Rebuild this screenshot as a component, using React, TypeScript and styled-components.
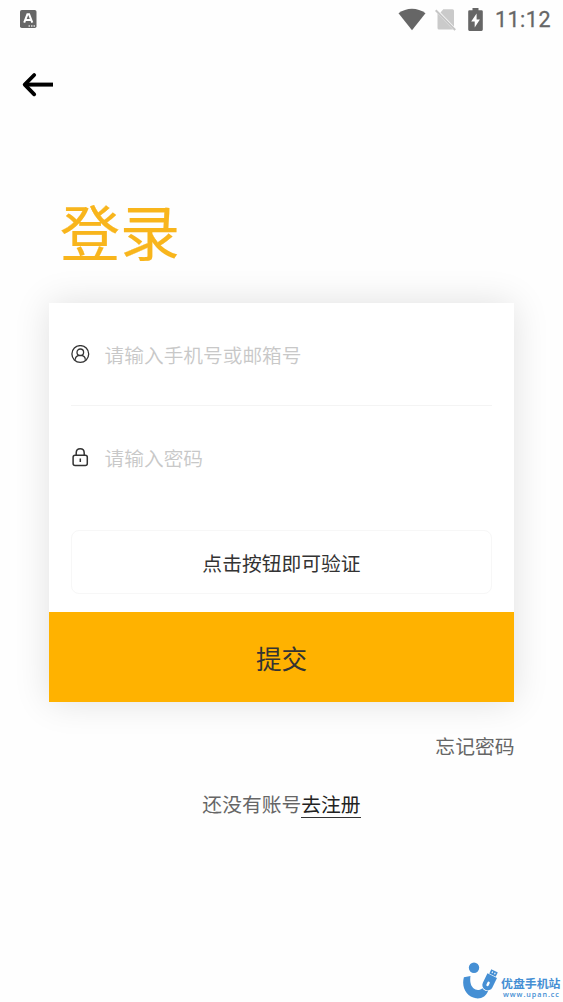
import React from 'react';
import styled, { createGlobalStyle } from 'styled-components';

const GlobalStyle = createGlobalStyle`
  * { box-sizing: border-box; }
  body {
    margin: 0;
    background: #fefefe;
    font-family: 'Noto Sans CJK SC', sans-serif;
  }
`;

const Screen = styled.main`
  display: flex;
  flex-direction: column;
  height: 1002px;
  overflow: hidden;
  background: #fefefe;
`;

const StatusBar = styled.header`
  display: flex;
  align-items: center;
  justify-content: space-between;
  height: 38px;
  padding: 0 12px 0 20px;
`;

const StatusIcons = styled.div`
  display: flex;
  align-items: center;
  gap: 9px;
  svg { display: block; }
`;

const Clock = styled.span`
  margin-left: 3px;
  padding-top: 2px;
  color: #666;
  font: 400 21.5px/36px Roboto, sans-serif;
  letter-spacing: 0.5px;
  -webkit-text-stroke: 0.3px #666;
`;

const NavBar = styled.nav`
  height: 92px;
  padding: 33px 0 0 21px;
`;

const BackButton = styled.button`
  display: block;
  padding: 0;
  border: 0;
  background: none;
  svg { display: block; }
`;

const Title = styled.h1`
  height: 86px;
  margin: 57px 0 30px 60px;
  color: #f8b51c;
  font-size: 60px;
  font-weight: 400;
  line-height: 86px;
  -webkit-text-stroke: 0.2px #f8b51c;
`;

const Card = styled.form`
  display: flex;
  flex-direction: column;
  width: 465px;
  height: 399px;
  margin-left: 49px;
  background: #fff;
  box-shadow: 0 0 34px rgba(0, 0, 0, 0.12);
`;

const Field = styled.label<{ $divided?: boolean }>`
  display: flex;
  align-items: center;
  gap: 14.6px;
  height: 103px;
  margin: 0 22px;
  border-bottom: 1px solid ${(p) => (p.$divided ? '#f4f4f4' : 'transparent')};
  svg { flex: none; }
`;

const Placeholder = styled.span`
  padding-top: 1px;
  color: #c8c8c8;
  font-size: 19.7px;
  font-weight: 350;
  line-height: 30px;
`;

const VerifyButton = styled.button`
  height: 64px;
  margin: 21px 22px 18px;
  padding: 2px 0 0;
  border: 1px solid #f7f7f7;
  border-radius: 8px;
  background: #fff;
  color: #333;
  font-family: inherit;
  font-size: 19.8px;
  line-height: 30px;
`;

const SubmitButton = styled.button`
  height: 90px;
  padding: 2px 0 0;
  border: 0;
  background: #ffb200;
  color: #333;
  font-family: inherit;
  font-size: 25.6px;
  line-height: 38px;
`;

const Forgot = styled.a`
  align-self: flex-end;
  margin: 29px 48.5px 0 0;
  color: #666;
  font-size: 19.8px;
  line-height: 30px;
`;

const SignUp = styled.p`
  display: flex;
  justify-content: center;
  margin: 28px 0 0;
  color: #666;
  font-size: 19.8px;
  line-height: 30px;
`;

const SignUpLink = styled.a`
  height: 29px;
  border-bottom: 1px solid #333;
  color: #222;
  line-height: 29px;
`;

const Footer = styled.footer`
  display: flex;
  align-items: flex-start;
  justify-content: flex-end;
  margin-top: auto;
  height: 40px;
  padding-right: 2px;
  color: #458fd4;
`;

const SiteName = styled.div`
  width: 60px;
  margin: 13px 0 0 3px;
  white-space: nowrap;
`;

const SiteLabel = styled.div`
  font-size: 11.9px;
  font-weight: 700;
  line-height: 15px;
`;

const SiteUrl = styled.div`
  padding-left: 2px;
  font: 600 7.2px/8px 'Open Sans', sans-serif;
  letter-spacing: 0.95px;
`;

const KeyboardIcon = () => (
  <svg width="17" height="20" viewBox="0 0 17 20">
    <rect y="1" width="16.5" height="18" rx="1.8" fill="#666" />
    <path d="M4.2 13.7 7.4 5.3h1.7l3.2 8.4M5.5 11h5.5" fill="none" stroke="#fff" strokeWidth="2" />
    <path d="M8.5 17h1.5m1 0h1.5m1 0h1.5" stroke="#ddd" strokeWidth="1.5" />
  </svg>
);

const WifiIcon = () => (
  <svg width="28" height="23" viewBox="0 0 28 23">
    <path d="M.5 5.300C8.500-.8 19.500-.8 27.500 5.300L14 22.300Z" fill="#666" />
  </svg>
);

const NoSimIcon = () => (
  <svg width="24" height="23" viewBox="0 0 24 23">
    <path d="M8.300 1.200h9.200q1.500 0 1.500 1.500v15.800L5.500 4.600Z M2.500 5.500 18 21.500H4Q2.500 21.500 2.500 20Z" fill="#cacaca" />
    <path d="M.7 2.200 20.200 22" stroke="#c6c6c6" strokeWidth="2" />
  </svg>
);

const BatteryIcon = () => (
  <svg width="15" height="23" viewBox="0 0 15 23">
    <path d="M4.500 0h6v2.300h3q1.300 0 1.300 1.300v18q0 1.300-1.300 1.300h-12q-1.300 0-1.300-1.300v-18q0-1.300 1.300-1.300h3Z" fill="#666" />
    <path d="M8.600 5.500 3.200 13.500h3.500v6l5.200-8H8.600Z" fill="#fff" />
  </svg>
);

const BackIcon = () => (
  <svg width="33" height="27" viewBox="0 0 33 27" fill="none" stroke="#000">
    <path d="M4 13.600h28" strokeWidth="4" />
    <path d="M13.200 4 3.700 13.600l9.500 9.700" strokeWidth="3.800" strokeLinecap="round" strokeLinejoin="round" />
  </svg>
);

const UserIcon = () => (
  <svg width="19" height="19" viewBox="0 0 19 19" fill="none" stroke="#333" strokeWidth="1.300">
    <circle cx="9.300" cy="9" r="8.400" />
    <circle cx="9.300" cy="7.300" r="3.300" />
    <path d="M4.300 14.800c0-2.800 2-4.400 5-4.400s5 1.600 5 4.400" />
  </svg>
);

const LockIcon = () => (
  <svg width="19" height="19" viewBox="0 0 19 19" fill="none" stroke="#333" strokeWidth="1.500">
    <rect x="2.100" y="7.200" width="14.200" height="10.200" rx="2" />
    <path d="M5.200 7V4.900c0-5.500 8-5.500 8 0V7M9.300 10.500V14" />
  </svg>
);

const SiteLogo = () => (
  <svg width="35" height="38" viewBox="0 0 35 38">
    <circle cx="11" cy="5.800" r="5.200" fill="currentColor" />
    <path d="M.9 15.200 7.500 14C6.500 20 8 25.500 12.500 27.500c2.500 1 5 .3 7-1.300 1.200 2 3.200 3 5.500 2.800C23.500 34 18.500 37 13 36.300 4 35-2 26 .9 15.200Z" fill="currentColor" />
    <g transform="rotate(26 26.500 19)">
      <path d="M21.300 13h10.600v10.500a5.300 5.300 0 0 1-10.600 0Z" fill="currentColor" />
      <rect x="23" y="7.600" width="7.200" height="4.800" rx=".4" fill="currentColor" />
      <path d="M25.200 9v1.700m2.800-1.700v1.700" stroke="#fff" />
      <path d="M26.500 21v2.500" stroke="#fff" strokeWidth="2.400" strokeLinecap="round" />
    </g>
  </svg>
);

export default function App() {
  return (
    <>
      <GlobalStyle />
      <Screen>
        <StatusBar>
          <KeyboardIcon />
          <StatusIcons>
            <WifiIcon />
            <NoSimIcon />
            <BatteryIcon />
            <Clock>11:12</Clock>
          </StatusIcons>
        </StatusBar>
        <NavBar>
          <BackButton type="button" aria-label="返回">
            <BackIcon />
          </BackButton>
        </NavBar>
        <Title>登录</Title>
        <Card>
          <Field $divided>
            <UserIcon />
            <Placeholder>请输入手机号或邮箱号</Placeholder>
          </Field>
          <Field>
            <LockIcon />
            <Placeholder>请输入密码</Placeholder>
          </Field>
          <VerifyButton type="button">点击按钮即可验证</VerifyButton>
          <SubmitButton type="button">提交</SubmitButton>
        </Card>
        <Forgot>忘记密码</Forgot>
        <SignUp>
          还没有账号<SignUpLink>去注册</SignUpLink>
        </SignUp>
        <Footer>
          <SiteLogo />
          <SiteName>
            <SiteLabel>优盘手机站</SiteLabel>
            <SiteUrl>www.upan.cc</SiteUrl>
          </SiteName>
        </Footer>
      </Screen>
    </>
  );
}
